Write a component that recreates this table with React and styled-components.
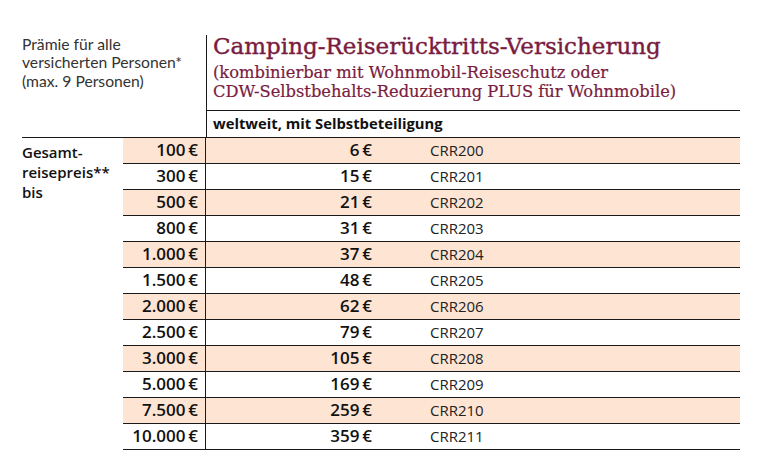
import React from 'react';
import styled, { createGlobalStyle } from 'styled-components';

const GlobalStyle = createGlobalStyle`
  html, body {
    margin: 0;
    padding: 0;
    background: #ffffff;
  }
  * {
    box-sizing: border-box;
  }
`;

const Page = styled.div`
  padding: 35px 24px 0 22px;
  width: 764px;
  font-family: "Open Sans", "Liberation Sans", sans-serif;
  color: #111;
`;

const Table = styled.div`
  width: 718px;
`;

const Header = styled.div`
  display: grid;
  grid-template-columns: 184px 1fr;
`;

const PersonsNote = styled.div`
  font-family: Lato, "Open Sans", sans-serif;
  font-size: 15.7px;
  line-height: 18.4px;
  color: #333;
`;

const HeadRight = styled.div`
  border-left: 1.5px solid #1a1a1a;
`;

const TitleBlock = styled.div`
  height: 77px;
  padding-left: 6px;
  font-family: "DejaVu Serif", "Liberation Serif", serif;
  color: #7a1c40;
  white-space: nowrap;
`;

const Title = styled.div`
  font-size: 23px;
  line-height: 26px;
  margin-top: -2px;
  -webkit-text-stroke: 0.4px #7a1c40;
`;

const Subtitle = styled.div`
  font-size: 16.3px;
  line-height: 19px;
  margin-top: 4px;
  -webkit-text-stroke: 0.2px #7a1c40;
`;

const Scope = styled.div`
  height: 27px;
  border-top: 1.5px solid #1a1a1a;
  padding-left: 6px;
  font-weight: 700;
  font-size: 14.8px;
  line-height: 24px;
`;

const Body = styled.div`
  display: grid;
  grid-template-columns: 101px 1fr;
  border-top: 1.5px solid #1a1a1a;
`;

const RowLabel = styled.div`
  font-weight: 600;
  font-size: 15px;
  line-height: 20px;
  padding-top: 4px;
`;

const Rows = styled.div`
  display: flex;
  flex-direction: column;
`;

const Row = styled.div`
  display: grid;
  grid-template-columns: 83px 174px 1fr;
  height: 26px;
  border-bottom: 1.5px solid #1a1a1a;
  background: ${(p) => (p.$shaded ? '#fde4d3' : 'transparent')};
  font-size: 17px;
  line-height: 24px;
`;

const Price = styled.div`
  text-align: right;
  padding-right: 7px;
  font-weight: 600;
  border-right: 1.5px solid #1a1a1a;
`;

const Premium = styled.div`
  text-align: right;
  padding-right: 8px;
  font-weight: 600;
`;

const Code = styled.div`
  padding-left: 50px;
  font-size: 15px;
  color: #222;
`;

const rows = [
  ['100', '6', 'CRR200'],
  ['300', '15', 'CRR201'],
  ['500', '21', 'CRR202'],
  ['800', '31', 'CRR203'],
  ['1.000', '37', 'CRR204'],
  ['1.500', '48', 'CRR205'],
  ['2.000', '62', 'CRR206'],
  ['2.500', '79', 'CRR207'],
  ['3.000', '105', 'CRR208'],
  ['5.000', '169', 'CRR209'],
  ['7.500', '259', 'CRR210'],
  ['10.000', '359', 'CRR211'],
];

export default function App() {
  return (
    <Page>
      <GlobalStyle />
      <Table>
        <Header>
          <PersonsNote>
            Prämie für alle
            <br />
            versicherten Personen*
            <br />
            (max. 9 Personen)
          </PersonsNote>
          <HeadRight>
            <TitleBlock>
              <Title>Camping-Reiserücktritts-Versicherung</Title>
              <Subtitle>
                (kombinierbar mit Wohnmobil-Reiseschutz oder
                <br />
                CDW-Selbstbehalts-Reduzierung PLUS für Wohnmobile)
              </Subtitle>
            </TitleBlock>
            <Scope>weltweit, mit Selbstbeteiligung</Scope>
          </HeadRight>
        </Header>
        <Body>
          <RowLabel>
            Gesamt-
            <br />
            reisepreis**
            <br />
            bis
          </RowLabel>
          <Rows>
            {rows.map(([price, premium, code], i) => (
              <Row key={code} $shaded={i % 2 === 0}>
                <Price>{price}&#8201;€</Price>
                <Premium>{premium}&#8201;€</Premium>
                <Code>{code}</Code>
              </Row>
            ))}
          </Rows>
        </Body>
      </Table>
    </Page>
  );
}
